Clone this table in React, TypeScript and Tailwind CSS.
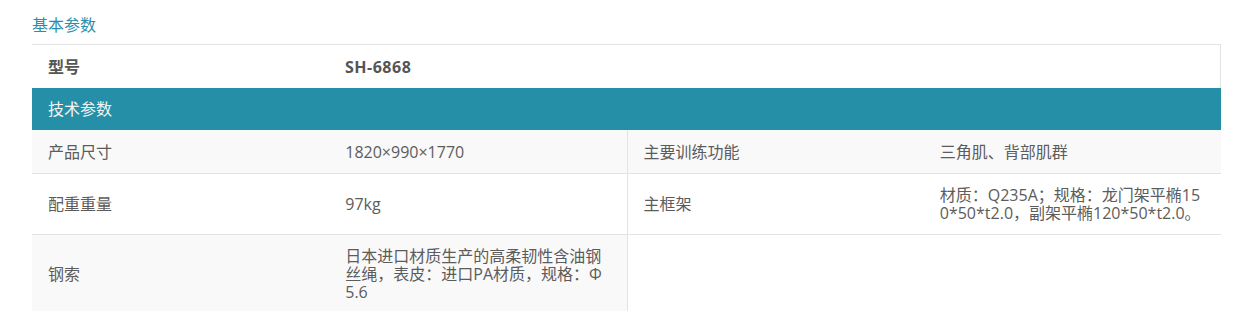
const font = { fontFamily: '"Open Sans", "Noto Sans CJK SC", sans-serif' };

type Cell = string | string[];

// one spec row: label / value / label / value
const specs: { cells: Cell[]; shaded: boolean[] }[] = [
  {
    cells: ['产品尺寸', '1820×990×1770', '主要训练功能', '三角肌、背部肌群'],
    shaded: [true, true, true, true],
  },
  {
    cells: ['配重重量', '97kg', '主框架', ['材质：Q235A；规格：龙门架平椭15', '0*50*t2.0，副架平椭120*50*t2.0。']],
    shaded: [false, false, false, false],
  },
  {
    cells: ['钢索', ['日本进口材质生产的高柔韧性含油钢', '丝绳，表皮：进口PA材质，规格：Φ', '5.6'], '', ''],
    shaded: [true, true, false, false],
  },
];

function CellText({ value }: { value: Cell }) {
  if (Array.isArray(value)) {
    return (
      <div>
        {value.map((line, i) => (
          <div key={i} className="whitespace-nowrap">
            {line}
          </div>
        ))}
      </div>
    );
  }
  return <div className="whitespace-nowrap">{value}</div>;
}

function App() {
  return (
    <div className="min-h-[311px] bg-white pl-8" style={font}>
      <div className="pt-[14px] mb-2 text-[16px] leading-[22px] text-[#2a8fad]">基本参数</div>

      <div className="w-[1189px]">
        <div className="grid h-[44px] grid-cols-4 items-center border-t border-r border-[#e3e3e3] text-[16px] font-bold text-[#555]">
          <div className="pl-4">型号</div>
          <div className="pl-4 tracking-[0.5px]">SH-6868</div>
        </div>

        <div className="flex h-[42px] items-center bg-[#258fa7] pl-4 text-[16px] text-[#f4f4f4]">技术参数</div>

        {specs.map((row, r) => (
          <div key={r} className="grid grid-cols-4 border-b border-[#e3e3e3] text-[16px] leading-[18px] text-[#5c5c5c]">
            {row.cells.map((cell, c) => (
              <div
                key={c}
                className={`flex min-h-[43px] items-center py-3 pr-5 pl-4 ${row.shaded[c] ? 'bg-[#f9f9f9]' : 'bg-white'} ${
                  c === 2 ? 'border-l border-[#e3e3e3]' : ''
                }`}
              >
                <CellText value={cell} />
              </div>
            ))}
          </div>
        ))}
      </div>
    </div>
  );
}

export default App;
